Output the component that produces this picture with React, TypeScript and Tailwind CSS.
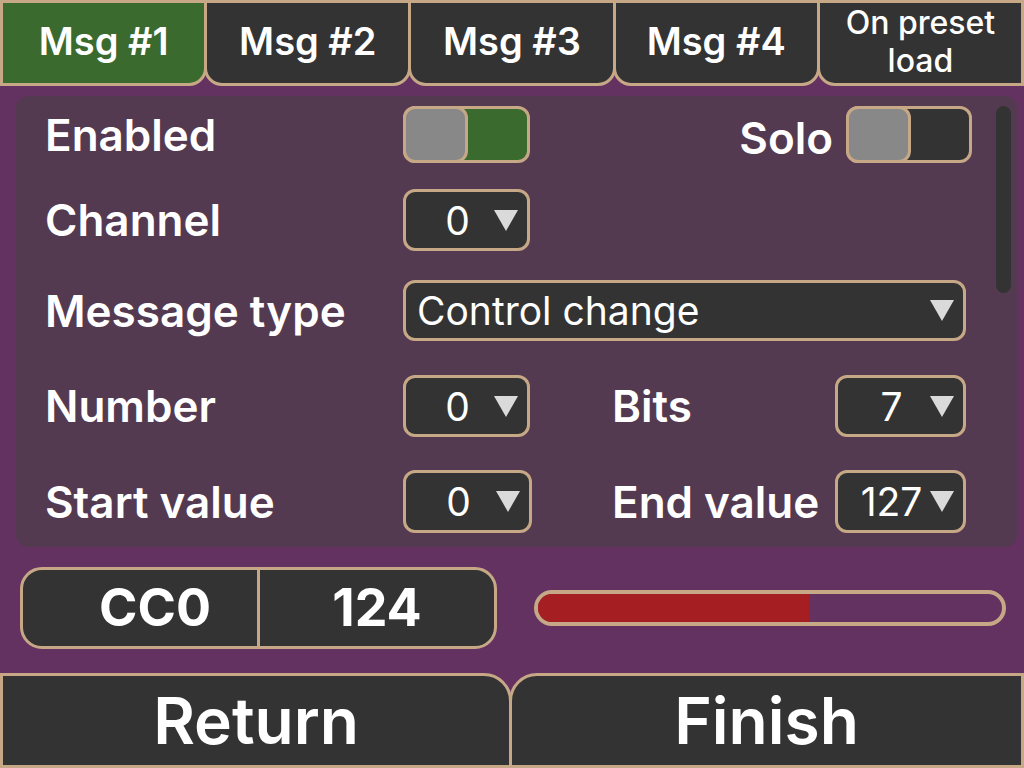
import React from "react";

const TAN = "border-[#c6a887]";

function Tri() {
  return (
    <svg width="24" height="21" viewBox="0 0 24 21" className="shrink-0">
      <polygon points="0,0 24,0 12,21" fill="#dadada" />
    </svg>
  );
}

function Dropdown({ value, w, left = false }: { value: string; w: string; left?: boolean }) {
  return (
    <div
      className={`${w} h-full flex items-center rounded-[12px] border-[3px] ${TAN} bg-[#333333] ${left ? "pl-[11px]" : "pl-[15px]"} pr-[9px]`}
    >
      <span
        className={`flex-1 ${left ? "text-left" : "text-center"} text-[39px] leading-none font-normal text-white whitespace-nowrap`}
      >
        {value}
      </span>
      <Tri />
    </div>
  );
}

function Toggle({ on, w }: { on: boolean; w: string }) {
  return (
    <div
      className={`relative ${w} h-full rounded-[12px] border-[3px] ${TAN} ${on ? "bg-[#3b6a2f]" : "bg-[#333333]"}`}
    >
      <div className={`absolute -left-[3px] -top-[3px] -bottom-[3px] w-[65px] rounded-[12px] border-[3px] ${TAN} bg-[#888888]`} />
    </div>
  );
}

const tabs = ["Msg #1", "Msg #2", "Msg #3", "Msg #4"];

export default function App() {
  return (
    <div className="w-[1024px] h-[768px] bg-[#643260] flex flex-col overflow-hidden text-white font-['Inter',sans-serif]">
      {/* Tabs */}
      <div className="flex h-[86px] shrink-0">
        {tabs.map((t, i) => (
          <div
            key={t}
            className={`flex-1 flex items-center justify-center border-[3px] ${TAN} ${
              i === 0 ? "bg-[#3b6a2f] rounded-br-[18px]" : "-ml-[3px] bg-[#333333] rounded-b-[18px]"
            } text-[38px] font-semibold leading-none pb-[4px]`}
          >
            {t}
          </div>
        ))}
        <div
          className={`flex-1 -ml-[3px] flex items-center justify-center border-[3px] ${TAN} bg-[#333333] rounded-bl-[18px] text-center text-[32px] font-medium leading-[38px] pb-[2px]`}
        >
          On preset
          <br />
          load
        </div>
      </div>

      {/* Panel */}
      <div className="ml-4 mr-[7px] mt-[10px] h-[451px] shrink-0 rounded-[12px] bg-[#543a51] flex">
        <div className="flex-1 flex flex-col pl-[29px] pt-[10px]">
          {/* Row 1 */}
          <div className="flex items-center h-[57px]">
            <div className="w-[358px] text-[44px] font-semibold leading-none">Enabled</div>
            <Toggle on={true} w="w-[127px]" />
            <div className="flex-1 text-right text-[44px] font-semibold leading-none pt-[6px]">Solo</div>
            <div className="ml-[13px] h-full">
              <Toggle on={false} w="w-[126px]" />
            </div>
          </div>
          {/* Row 2 */}
          <div className="flex items-center h-[62px] mt-[26px]">
            <div className="w-[358px] text-[44px] font-semibold leading-none">Channel</div>
            <Dropdown value="0" w="w-[127px]" />
          </div>
          {/* Row 3 */}
          <div className="flex items-center h-[61px] mt-[29px]">
            <div className="w-[358px] text-[44px] font-semibold leading-none">Message type</div>
            <Dropdown value="Control change" w="w-[563px]" left />
          </div>
          {/* Row 4 */}
          <div className="flex items-center h-[62px] mt-[34px]">
            <div className="w-[358px] text-[44px] font-semibold leading-none">Number</div>
            <Dropdown value="0" w="w-[127px]" />
            <div className="ml-[82px] w-[223px] text-[44px] font-semibold leading-none">Bits</div>
            <Dropdown value="7" w="w-[131px]" />
          </div>
          {/* Row 5 */}
          <div className="flex items-center h-[63px] mt-[33px]">
            <div className="w-[358px] text-[44px] font-semibold leading-none">Start value</div>
            <Dropdown value="0" w="w-[129px]" />
            <div className="ml-[80px] w-[223px] text-[44px] font-semibold leading-none">End value</div>
            <Dropdown value="127" w="w-[131px]" />
          </div>
        </div>
        {/* Scrollbar */}
        <div className="w-[15px] h-[187px] mt-[10px] mr-[6px] ml-[24px] rounded-full bg-[#333333]" />
      </div>

      {/* Readout + bar */}
      <div className="flex items-center mt-[20px] h-[82px] shrink-0">
        <div className={`ml-5 w-[477px] h-full flex rounded-[22px] border-[3px] ${TAN} bg-[#333333]`}>
          <div className={`w-[237px] h-full flex items-center justify-center pl-[30px] border-r-[3px] ${TAN} text-[52px] font-bold leading-none`}>
            CC0
          </div>
          <div className="flex-1 h-full flex items-center justify-center text-[52px] font-bold leading-none">
            124
          </div>
        </div>
        <div className={`ml-[37px] w-[472px] h-[36px] rounded-full border-[4px] ${TAN} overflow-hidden`}>
          <div className="h-full bg-[#a51f22]" style={{ width: "58.4%" }} />
        </div>
      </div>

      {/* Bottom buttons */}
      <div className="flex mt-[24px] flex-1">
        <div className={`w-[512px] h-full flex items-center justify-center border-[3px] ${TAN} bg-[#333333] rounded-tr-[28px] text-[64px] font-semibold leading-none`}>
          Return
        </div>
        <div className={`flex-1 -ml-[3px] h-full flex items-center justify-center border-[3px] ${TAN} bg-[#333333] rounded-tl-[28px] text-[64px] font-semibold leading-none`}>
          Finish
        </div>
      </div>
    </div>
  );
}
